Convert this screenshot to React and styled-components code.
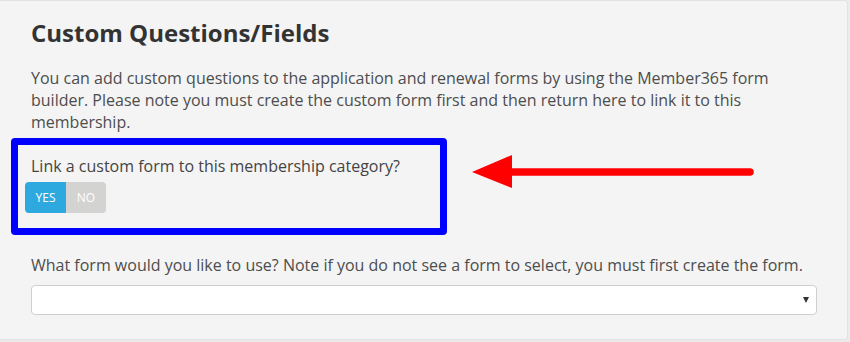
import React from 'react'
import styled, { createGlobalStyle } from 'styled-components'

const GlobalStyle = createGlobalStyle`
  html, body {
    margin: 0;
    padding: 0;
    background: #ebebeb;
  }
  body {
    font-family: "Open Sans", "Liberation Sans", sans-serif;
    color: #4d4d4d;
  }
`

const Panel = styled.section`
  width: 848px;
  box-sizing: border-box;
  background: #f4f4f4;
  border: 1px solid #e2e2e2;
  border-left: none;
  border-radius: 0 4px 4px 0;
  padding: 19px 30px 24px 31px;
`

const Title = styled.h2`
  margin: 0;
  font-size: 24px;
  line-height: 26px;
  font-weight: 700;
  color: #333;
`

const Intro = styled.p`
  margin: 21px 0 0;
  font-size: 16px;
  line-height: 22px;
`

const CalloutRow = styled.div`
  display: flex;
  align-items: flex-start;
  margin-top: 5px;
`

const Highlight = styled.div`
  box-sizing: border-box;
  width: 436px;
  height: 97px;
  margin-left: -20px;
  border: 7px solid #0000ff;
  border-radius: 4px;
  padding: 10px 0 0 13px;
`

const Label = styled.div`
  font-size: 16px;
  line-height: 22px;
  color: ${(p) => p.color || '#4d4d4d'};
`

const Switch = styled.div`
  display: inline-flex;
  margin: 5px 0 0 -6px;
  height: 31px;
  border-radius: 4px;
  overflow: hidden;
`

const SwitchSide = styled.span`
  display: flex;
  align-items: center;
  justify-content: center;
  width: ${(p) => p.w}px;
  background: ${(p) => (p.on ? '#2ea9df' : '#d3d3d2')};
  color: #fff;
  font-size: 12px;
  text-transform: uppercase;
`

const Arrow = styled.svg`
  flex: none;
  margin: 16px 0 0 25px;
`

const FieldLabel = styled(Label)`
  margin-top: 19px;
`

const SelectWrap = styled.div`
  position: relative;
  margin-top: 9px;
`

const Select = styled.select`
  display: block;
  width: 100%;
  height: 30px;
  box-sizing: border-box;
  appearance: none;
  background: #fff;
  border: 1px solid #cfcfcf;
  border-radius: 4px;
  font-family: inherit;
  font-size: 14px;
  padding: 0 24px 0 8px;
  outline: none;
`

const Caret = styled.span`
  position: absolute;
  right: 8px;
  top: 12px;
  width: 0;
  height: 0;
  border-left: 3px solid transparent;
  border-right: 3px solid transparent;
  border-top: 6px solid #333;
  pointer-events: none;
`

export default function App() {
  return (
    <>
      <GlobalStyle />
      <Panel>
        <Title>Custom Questions/Fields</Title>
        <Intro>
          You can add custom questions to the application and renewal forms by using the Member365
          form builder. Please note you must create the custom form first and then return here to
          link it to this membership.
        </Intro>
        <CalloutRow>
          <Highlight>
            <Label color="#444">Link a custom form to this membership category?</Label>
            <Switch>
              <SwitchSide on w={41}>Yes</SwitchSide>
              <SwitchSide w={40}>No</SwitchSide>
            </Switch>
          </Highlight>
          <Arrow width="282" height="36" viewBox="0 0 282 36">
            <line x1="36" y1="18" x2="278" y2="18" stroke="#ff0000" strokeWidth="7.5" strokeLinecap="round" />
            <polygon points="0,18 40,1 40,34" fill="#ff0000" />
          </Arrow>
        </CalloutRow>
        <FieldLabel>
          What form would you like to use? Note if you do not see a form to select, you must first
          create the form.
        </FieldLabel>
        <SelectWrap>
          <Select defaultValue="">
            <option value=""></option>
          </Select>
          <Caret />
        </SelectWrap>
      </Panel>
    </>
  )
}
